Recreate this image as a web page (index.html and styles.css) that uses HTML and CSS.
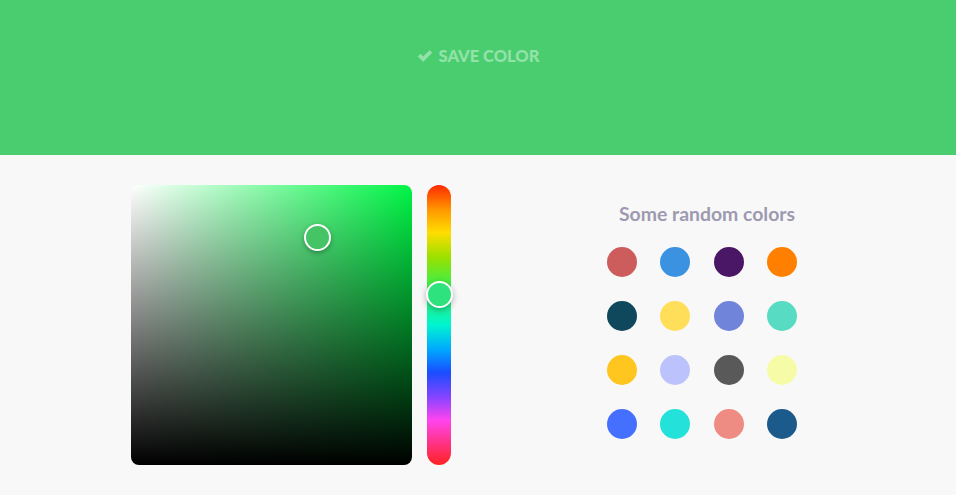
FILE: index.html
```html
<!DOCTYPE html>
<html lang="en">
<head>
  <meta charset="UTF-8" />
  <title>Color Picker</title>
  <link rel="stylesheet" href="styles.css">
</head>
<body>
  <header class="preview">
    <button class="save-btn">
      <svg class="check" viewBox="0 0 16 16" width="16" height="16"><path d="M0.8 8.4 L3.4 5.8 L6.2 8.6 L12.6 2.2 L15.2 4.8 L6.2 13.8 Z" fill="currentColor"/></svg>
      SAVE COLOR
    </button>
  </header>

  <main class="workspace">
    <div class="picker">
      <div class="sat-box">
        <span class="sat-cursor"></span>
      </div>
      <div class="hue-bar">
        <span class="hue-cursor"></span>
      </div>
    </div>

    <section class="randoms">
      <h2>Some random colors</h2>
      <div class="swatches">
        <span class="swatch" style="background:#cd5c5c"></span>
        <span class="swatch" style="background:#3a92e0"></span>
        <span class="swatch" style="background:#4a1766"></span>
        <span class="swatch" style="background:#ff8000"></span>
        <span class="swatch" style="background:#0f475c"></span>
        <span class="swatch" style="background:#ffdf5a"></span>
        <span class="swatch" style="background:#7085d9"></span>
        <span class="swatch" style="background:#57dbc2"></span>
        <span class="swatch" style="background:#ffc61f"></span>
        <span class="swatch" style="background:#bcc3fc"></span>
        <span class="swatch" style="background:#595959"></span>
        <span class="swatch" style="background:#f6fba8"></span>
        <span class="swatch" style="background:#4570ff"></span>
        <span class="swatch" style="background:#22e2da"></span>
        <span class="swatch" style="background:#ee8b83"></span>
        <span class="swatch" style="background:#1c5a8b"></span>
      </div>
    </section>
  </main>
</body>
</html>
```

FILE: styles.css
```css
html, body {
  margin: 0;
  padding: 0;
  font-family: 'Lato', 'Open Sans', Arial, sans-serif;
  background: #f8f8f8;
}
.preview {
  height: 155px;
  background: #4acd6f;
  display: flex;
  justify-content: center;
  align-items: flex-start;
}
.save-btn {
  margin-top: 46px;
  display: flex;
  align-items: center;
  gap: 6px;
  background: none;
  border: none;
  padding: 0;
  color: #93e2aa;
  font-family: inherit;
  font-weight: 900;
  font-size: 16.5px;
  cursor: pointer;
}
.check { display: block; }
.workspace {
  display: flex;
  align-items: flex-start;
  padding: 30px 0 0 131px;
}
.picker {
  display: flex;
  gap: 15px;
}
.sat-box {
  position: relative;
  width: 281px;
  height: 280px;
  border-radius: 8px;
  background:
    linear-gradient(to top, #000, rgba(0,0,0,0)),
    linear-gradient(to right, #fff, hsl(137, 100%, 48%));
}
.sat-cursor {
  position: absolute;
  left: 173px;
  top: 39px;
  width: 23px;
  height: 23px;
  border: 2px solid #fff;
  border-radius: 50%;
  background: #44c465;
  box-shadow: 0 2px 5px rgba(0,0,0,0.3);
}
.hue-bar {
  position: relative;
  width: 24px;
  height: 280px;
  border-radius: 12px;
  background: linear-gradient(to bottom, #ff2a00 0%, #ff9900 9%, #ffdd00 17%, #99e000 26%, #44ee44 35%, #00f5d0 50%, #00a6ff 59%, #1a4dff 67%, #8844ff 76%, #ff44ee 84%, #ff3388 92%, #ff2222 100%);
}
.hue-cursor {
  position: absolute;
  left: -1px;
  top: 96px;
  width: 23px;
  height: 23px;
  border: 2px solid #fff;
  border-radius: 50%;
  background: #2ee37d;
  box-shadow: 0 2px 6px rgba(0,0,0,0.3);
}
.randoms {
  margin-left: 156px;
  width: 190px;
}
.randoms h2 {
  margin: 17px 0 22px 0;
  text-align: right;
  padding-right: 2px;
  font-size: 19.4px;
  font-weight: 700;
  color: #9d9ab0;
}
.swatches {
  display: grid;
  grid-template-columns: repeat(4, 30px);
  justify-content: space-between;
  row-gap: 24px;
}
.swatch {
  width: 30px;
  height: 30px;
  border-radius: 50%;
}
```
